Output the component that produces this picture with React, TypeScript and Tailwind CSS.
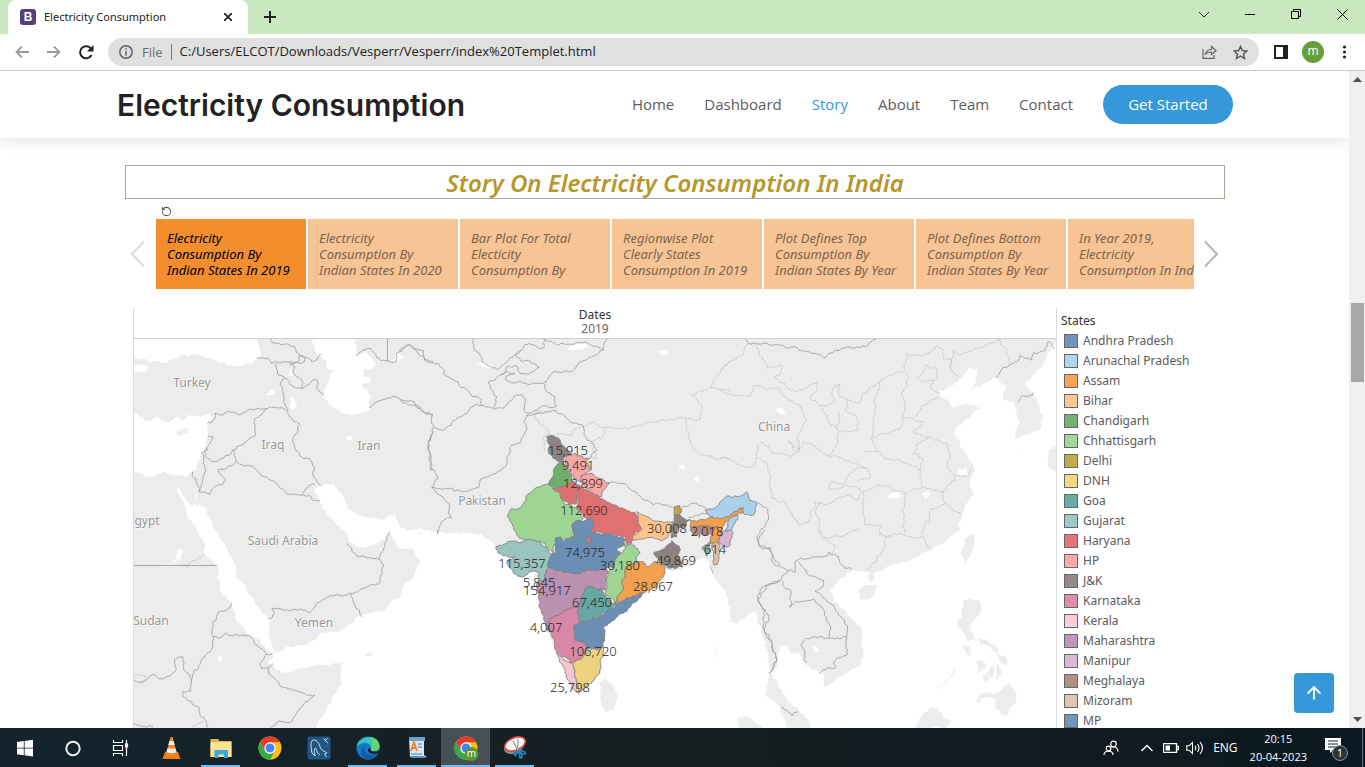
import React from "react";
import { ArrowUp, RotateCcw } from "lucide-react";

type Point = [number, number];

/* Map geometry is digitised in tiles at three units per map pixel. */
const parse = (ox: number, oy: number, text: string): Point[] =>
  text
    .trim()
    .split(/\s+/)
    .map((pair) => {
      const [x, y] = pair.split(",").map(Number);
      return [ox + x / 3, oy + y / 3] as Point;
    });

const noise = (x: number, y: number) => {
  const v = Math.sin(Math.round(x * 8) * 12.9898 + Math.round(y * 8) * 78.233) * 43758.5453;
  return v - Math.floor(v) - 0.5;
};

const split = (a: Point, b: Point, out: Point[]) => {
  const len = Math.hypot(a[0] - b[0], a[1] - b[1]);
  if (len > 2.4 && len < 70) {
    const mx = (a[0] + b[0]) / 2;
    const my = (a[1] + b[1]) / 2;
    const k = Math.min(len, 7) * 0.42;
    const mid: Point = [mx + noise(mx, my) * k, my + noise(my, mx) * k];
    split(a, mid, out);
    split(mid, b, out);
  } else {
    out.push(b);
  }
};

const rough = (points: Point[], closed: boolean) => {
  const out: Point[] = [points[0]];
  for (let i = 1; i < points.length; i++) split(points[i - 1], points[i], out);
  if (closed) split(points[points.length - 1], points[0], out);
  return out.map((p) => p[0].toFixed(1) + "," + p[1].toFixed(1)).join(" ");
};

const west = (t: string) => parse(133, 335, t);
const southWest = (t: string) => parse(133, 530, t);
const india = (t: string) => parse(480, 420, t);
const north = (t: string) => parse(400, 335, t);
const east = (t: string) => parse(720, 335, t);
const southEast = (t: string) => parse(700, 530, t);

const ocean = rough(
  [
    ...southWest("545,595 575,550 600,500 625,455 630,395 580,405 520,415 455,430 425,415 405,395 420,375 380,330 335,300 310,270 298,220 262,185 256,110 215,70 215,40 190,0"),
    ...west("160,530 132,455 160,497 180,515 195,470 188,510 210,512 240,570 255,590"),
    ...southWest("280,60 310,110 310,135 345,190 380,240 410,265 412,330 425,370 470,350 530,335 580,310 630,295 665,265 710,250 745,245 770,220 800,200 815,160 835,150 865,95 845,65 790,45 768,5 750,28 715,47 665,48 645,35 640,5 628,0"),
    ...west("605,560 580,530 560,495 545,470 558,450 600,445 635,490 640,515 680,545 740,555 770,540 790,545 800,580 900,598"),
    ...north("0,595 60,580 110,590 240,598 250,610"),
    ...india("0,340 40,370 48,385 60,405 105,410 80,425 100,462 125,472 150,455 165,455 172,520 190,600 225,690 265,780 295,822 335,790 360,762 362,710 370,680 375,620 430,580 490,520 545,490 555,450 610,445 650,420 675,410 690,440 700,465"),
    ...southEast("60,165 75,180 90,240 90,275 110,282 150,250 165,245 185,300 205,370 210,430 195,490 240,530 260,595 330,597 325,570 295,540 260,510 235,470 215,430 235,390 240,345 265,345 270,370 295,365 310,400 330,415 370,430 370,478 420,440 480,405 490,380 485,300 440,250 400,210 390,180 420,145 460,120 510,125 505,150 520,155 520,130 560,112 620,95 695,60 740,30 780,0"),
    ...east("715,570 730,530 765,480 750,440 765,410 740,360 700,295 735,255 785,220 740,205 700,220 655,170 700,150 730,120 750,95 775,105 755,160 800,140 830,130 860,150 850,195 885,200 895,255 885,310 925,298 960,285 968,240 940,180 915,150 960,100 980,60 1005,25 1020,10 1030,600"),
    [1062, 735] as Point,
  ],
  false,
);

const lakes = [
  west("-5,8 375,8 385,60 350,85 310,92 260,85 200,62 150,60 100,85 45,80 10,70 -5,60"),
  west("-5,240 15,235 40,260 70,245 90,260 120,255 135,245 150,255 165,240 200,245 230,235 235,250 225,260 225,300 215,350 180,410 160,425 100,412 50,425 -5,415"),
  west("-5,90 20,88 48,97 40,110 -5,110"),
  west("530,8 670,8 672,60 700,50 730,85 720,100 695,100 690,125 715,128 705,145 685,150 710,180 710,225 655,240 600,215 570,180 590,120 610,110 585,105 570,70 545,45"),
  west("400,175 415,160 425,170 420,180 405,182"),
  west("470,185 485,190 492,215 480,225 472,205"),
  west("640,308 652,300 658,312 650,318"),
  west("780,75 795,50 812,60 800,75"),
  west("465,105 478,100 482,120 470,122"),
  north("500,38 530,28 562,30 545,45 515,48"),
  north("225,86 255,84 280,98 250,97"),
  north("775,50 803,48 800,60 785,62"),
  north("835,395 850,388 855,402 842,402"),
  north("880,432 898,423 895,438 885,438"),
  east("168,225 182,218 200,238 185,240"),
  east("605,475 625,468 628,485 615,495"),
  east("498,482 540,468 545,485 510,490"),
  east("715,405 735,400 740,420 720,422"),
  southWest("97,115 130,85 138,55 150,60 145,85 125,95"),
  southWest("252,385 262,376 270,385 262,398"),
  southEast("338,350 350,352 362,372 345,365"),
].map((p) => rough(p, true));

const islands = [
  west("130,290 150,282 170,280 165,292 145,302 132,300"),
  southWest("693,372 715,369 717,374 698,376"),
  india("372,775 385,785 405,810 412,840 395,870 375,875 360,835 362,800"),
  india("710,675 708,700 703,728 706,700"),
  southEast("475,185 500,165 533,165 525,190 500,210 480,208"),
  southEast("825,12 820,50 797,103 780,70 795,30 812,15"),
  southEast("788,212 810,205 837,210 842,245 820,275 810,300 830,335 800,330 775,290 775,265 788,268 785,235"),
  southEast("787,348 810,350 817,372 805,378"),
  southEast("832,325 858,328 888,350 893,370 865,348 840,345"),
  southEast("890,372 918,380 920,405 900,395"),
  southEast("830,392 855,398 858,412 835,430"),
  southEast("848,440 860,425 868,440 858,462"),
  southEast("870,412 883,405 878,445 868,440"),
  southEast("895,402 905,420 895,440 885,448 890,420"),
  southEast("830,520 838,495 870,485 880,495 905,480 915,465 930,455 945,480 950,520 930,530 925,555 905,555 885,530 885,505 865,500 845,505"),
  southEast("705,480 740,450 765,415 766,428 735,458"),
  southEast("640,595 660,565 690,530 710,535 730,565 755,572 740,595"),
  southEast("113,562 130,560 160,572 180,585 190,598 118,598"),
  east("985,350 1015,330 1015,415 990,400"),
  east("885,345 898,343 895,348"),
].map((p) => rough(p, true));

const borders = [
  west("412,12 425,25 445,30 460,25 485,35 490,50 515,65 535,80 550,75 565,58"),
  west("372,70 405,68 415,85 450,80 480,82 500,75 500,60 510,62 515,80 500,85 470,85 485,100 480,115 492,125 500,130 508,150 508,160 490,160 470,148 455,130 435,120 430,85"),
  west("508,160 525,150 540,135 555,140 550,160 572,180"),
  west("455,130 442,148 450,170 452,200 460,215 470,245 500,268 495,290 480,310 485,335 500,355 535,378 545,400 540,420 562,453"),
  west("223,265 240,255 245,235 270,240 290,230 315,238 360,225 390,222 410,215 440,218 460,225"),
  west("400,220 385,240 370,248 368,300 340,320 300,345 250,380 235,378 218,365 215,350 232,325 240,305 225,303"),
  west("300,345 308,380 345,390 370,405 400,425 460,475 508,480 535,485 540,497 560,497"),
  west("508,480 518,460 530,450 545,448"),
  west("178,410 198,470 210,430 213,360 205,355 225,340"),
  west("308,383 255,405 278,435 265,450 245,455 230,478 198,470"),
  west("708,217 730,200 765,188 790,185 820,205 850,210 880,238 900,240"),
  west("668,62 690,45 712,40 745,78 790,80 790,60 805,40 830,30 870,45 875,75 900,80"),
  west("900,290 888,315 885,340 893,370 893,405 900,405"),
  southWest("643,40 672,78 740,88 770,5"),
  southWest("740,88 752,105 736,163 655,191 580,203 553,218 530,248 515,240 430,235 418,235 418,262 405,265"),
  southWest("655,191 685,260"),
  southWest("297,220 285,235 255,247 250,260 238,300 240,322 232,365 210,385 197,415 185,420 175,450 175,482 150,485 150,498 195,530 205,560 218,570 225,593"),
  southWest("240,322 265,322 278,308 300,318 340,318 360,330 400,373 418,368"),
  southWest("400,373 382,400 385,415 405,413 420,400"),
  southWest("405,413 408,432 440,467 520,495 545,495 468,578 430,578 412,593"),
  southWest("0,450 15,458 40,450 65,433 90,447 110,440 130,415 125,388 150,380 152,410 170,440 175,455"),
  southWest("0,583 20,588 60,590"),
  north("220,12 230,50 245,80 275,95 295,103 325,75 365,45 375,28 430,38 435,12"),
  north("620,12 610,45 575,65 540,80 510,110 455,115 430,145 370,145 320,138 318,125 345,115 325,110 305,120"),
  north("365,45 345,60 370,80 385,75 418,97 400,110 360,115 345,90 320,95 318,110 300,120 265,145 290,185 280,220 245,212 225,210 190,240 155,270 130,285 100,278 98,240 70,232 45,205 0,195"),
  north("430,12 500,28 560,22 610,45"),
  north("0,50 25,28 45,40 70,65 85,80 115,85 135,122 180,155 245,195 245,212"),
  north("280,225 310,220 340,190 365,178 378,200 378,235 400,230 425,215 470,213 465,185 440,170 430,145"),
  north("380,240 440,230 465,225 490,240 510,260 550,275"),
  north("380,240 372,262 380,285 360,325 335,330 320,370 315,395 265,425 240,435 235,458 180,468 95,458 115,430 90,400 85,320 100,278"),
  north("95,458 120,480 145,505 145,535 155,548 125,560 112,598"),
  north("550,275 560,310 590,345 570,370 555,380 570,400"),
  india("385,190 400,185 440,195 480,228 520,255 580,262"),
  india("605,275 610,258 635,250 675,262 680,280 650,285 625,290"),
  india("830,245 860,265 865,300 835,345 840,380 870,382 880,410 900,435"),
  india("690,440 698,460"),
  india("900,480 860,495 835,535 855,570 850,625 875,670 890,720 868,760"),
  southEast("195,0 178,20 178,48 210,55 215,85 225,105 265,122 245,140 240,152 190,170 180,185 173,208 205,255 208,270 192,300 215,335 230,390 208,430"),
  southEast("265,122 285,128 285,95 330,85 370,80 385,68 415,80 425,105 455,118"),
  southEast("295,95 320,130 345,140 370,150 368,170 345,183 390,220 435,270 443,300 440,320 385,325 340,320 318,325 303,345 312,375 320,398"),
  southEast("245,152 255,175 272,180 270,232 300,215 345,210 368,235 388,285 388,322"),
  southEast("440,320 443,372 400,398 405,415 378,418 358,430"),
  southEast("243,530 265,545 275,557 295,545"),
  east("75,12 85,25 160,30 225,35 260,50 315,68 375,38 440,35 468,12"),
  east("830,128 840,112 890,80 900,62 935,75 940,55 975,45 985,20 1003,42"),
  east("895,200 905,183 938,180 940,172"),
].map((p) => rough(p, false));

const provinces = [
  east("0,103 25,85 70,60 80,28 105,28 120,65 140,100 185,92 180,120 165,125 230,170 290,145 288,170 270,190 300,212 340,205 335,165 360,148 358,185 415,205 430,175 480,142 515,120 555,105 560,55 610,60 650,32 670,45 670,70 695,75 690,95 712,125"),
  east("0,163 35,178 90,185 105,152 140,165 165,160 195,185 240,210 258,255 235,300 240,345 205,318 225,350 250,320 300,345 325,362 350,330 355,290 415,285 410,245 375,225 380,195"),
  east("300,212 320,240 325,262 355,285 355,225"),
  east("480,142 462,200 462,250 455,305 475,350 495,372 540,375 600,405 610,455 670,470 705,420 740,425 755,400"),
  east("455,305 500,295 545,275 548,245 555,205 545,180 560,150 560,110"),
  east("548,248 585,255 610,260 580,290 625,305 680,325 690,370 680,395 705,420"),
  east("590,245 605,215 655,187"),
  east("595,130 620,90 650,105 645,135 600,138"),
  east("640,135 632,160 660,172"),
  east("690,95 700,45 720,62 760,45 840,12 870,85"),
  east("600,405 605,370 580,355 590,330 625,305"),
  east("435,350 475,352"),
  east("0,372 40,375 80,400 105,385 112,330 130,322 155,355 215,365 240,345"),
  east("112,370 140,385 150,420 155,490 190,500 235,570 265,560 285,500 330,505 380,480 415,495 425,470 400,455 325,460 335,440 375,445 410,395 445,405 450,425 410,435"),
  east("325,362 365,368 410,385 440,400"),
  east("430,470 480,450 530,468 555,475 610,455"),
  east("430,470 430,530 435,570 485,570 480,598"),
  east("555,475 548,530 555,598"),
  east("670,470 675,505 635,520 625,560 605,598"),
  east("675,505 725,535"),
  east("300,500 285,535 300,565 300,598"),
  southEast("360,0 370,25 405,45 400,65 385,68"),
  southEast("370,25 420,20 475,0"),
  southEast("500,118 530,95 545,65 560,20 600,10 640,25 670,20 697,60"),
  southEast("560,20 535,12"),
  north("405,250 405,235 440,230"),
  north("405,250 420,270 445,285 445,300 430,305 435,350"),
  north("470,300 515,300 530,280 550,275 585,262 612,280 605,310 575,318 580,350 590,370 560,372"),
  north("612,280 690,280 780,255 860,250 900,255 905,210 875,180 935,158 940,140 990,75"),
  north("935,158 990,165"),
  north("860,250 865,310 890,350 940,370 990,372"),
  southWest("150,105 165,112 190,90 215,72"),
  southWest("5,437 38,437 38,455 8,455"),
  southWest("178,590 210,575"),
].map((p) => rough(p, false));

const states: { name: string; fill: string; shape: string }[] = [
  { name: "Jammu and Kashmir", fill: "#8b8482", shape: "200,50 215,45 240,60 260,85 275,105 255,110 250,125 230,122 205,100 210,80" },
  { name: "Punjab", fill: "#71ad6c", shape: "232,132 248,125 260,150 275,165 280,185 250,200 220,203 203,193 220,165 222,145" },
  { name: "Haryana", fill: "#e07173", shape: "218,205 250,200 275,185 300,195 290,215 290,250 270,255 245,240 240,222" },
  { name: "Rajasthan", fill: "#9fd592", shape: "190,195 215,200 240,225 247,245 270,256 290,265 310,295 275,320 285,345 250,360 230,355 222,400 205,385 180,365 120,355 95,310 82,290 95,265 120,265 150,220" },
  { name: "Gujarat", fill: "#99c4bf", shape: "48,380 90,365 120,368 150,358 180,365 205,390 212,410 200,450 198,480 183,488 170,455 150,455 125,472 105,462 80,425 105,410 70,408 55,400" },
  { name: "Madhya Pradesh", fill: "#6b8eb5", shape: "275,320 300,302 325,295 340,305 335,340 380,342 400,348 435,358 435,378 410,390 425,400 410,415 400,445 370,448 330,450 290,460 250,458 205,440 215,400 228,395 225,355 240,350 250,365 285,345" },
  { name: "Uttar Pradesh", fill: "#e07173", shape: "290,195 320,210 360,235 400,255 440,272 465,278 475,300 485,325 460,345 455,370 440,375 438,350 400,345 370,340 335,340 340,300 320,295 290,265" },
  { name: "Lalitpur", fill: "#e07173", shape: "320,348 328,350 333,368 322,365" },
  { name: "Himachal Pradesh", fill: "#faa5a6", shape: "258,108 285,100 310,115 325,115 332,150 318,160 305,165 300,185 280,175 265,150 255,125" },
  { name: "Uttarakhand", fill: "#faa5a6", shape: "303,168 330,160 355,175 388,188 375,205 365,230 345,225 320,205 305,190" },
  { name: "Bihar", fill: "#fdc48b", shape: "470,275 510,295 545,305 580,305 575,330 550,360 510,352 460,362 458,345 485,325 475,300" },
  { name: "West Bengal", fill: "#8b8482", shape: "582,285 600,285 628,300 620,315 595,320 590,350 575,355 570,325 582,308" },
  { name: "South Bengal", fill: "#8b8482", shape: "575,362 598,380 600,420 608,440 570,445 545,430 520,400 555,385" },
  { name: "Sikkim", fill: "#bda548", shape: "582,262 600,257 602,280 582,283" },
  { name: "Meghalaya", fill: "#ab8c7c", shape: "630,330 660,318 715,322 700,345 640,345" },
  { name: "Assam", fill: "#f29e4c", shape: "628,297 700,292 740,290 775,268 790,262 788,278 760,290 735,305 725,335 715,370 695,372 695,345 715,322 660,318 632,325" },
  { name: "Arunachal Pradesh", fill: "#abd0e9", shape: "678,270 710,260 740,228 775,230 800,215 808,240 830,255 820,285 790,280 790,262 775,268 740,290 690,290" },
  { name: "Nagaland", fill: "#abd0e9", shape: "735,330 745,300 775,285 765,310 755,330" },
  { name: "Manipur", fill: "#dab3d1", shape: "720,350 733,333 758,335 755,355 745,380 718,370" },
  { name: "Mizoram", fill: "#dabdae", shape: "695,375 700,368 718,372 718,400 710,435 702,435" },
  { name: "Tripura", fill: "#7db4ae", shape: "665,385 690,365 690,395 678,408" },
  { name: "Maharashtra", fill: "#ba91b1", shape: "205,440 250,458 290,460 330,450 380,448 380,510 350,510 340,502 320,500 305,535 295,560 245,580 212,595 210,615 192,600 175,530 170,490 198,480 200,450" },
  { name: "Goa", fill: "#4d9a94", shape: "195,612 210,618 208,635 201,630" },
  { name: "Karnataka", fill: "#d987a6", shape: "212,595 245,580 295,560 300,605 283,620 285,665 320,670 318,690 300,718 270,725 230,695 215,640 208,620" },
  { name: "Telangana", fill: "#67a7a3", shape: "320,500 340,502 350,510 365,505 375,530 405,550 400,568 360,585 300,608 295,560 305,530" },
  { name: "Odisha", fill: "#f0a04f", shape: "480,425 490,425 500,440 525,423 535,432 555,440 550,470 520,505 490,518 445,540 405,550 430,505 425,480 440,440 465,430" },
  { name: "Chhattisgarh", fill: "#9fd592", shape: "438,378 462,375 480,400 470,425 440,440 425,480 430,505 405,550 390,535 375,525 380,480 385,455 400,445 410,415 425,400" },
  { name: "Andhra Pradesh", fill: "#6b8eb5", shape: "490,520 470,545 430,580 385,610 370,620 370,685 320,690 318,670 300,665 283,655 283,615 300,608 360,588 405,562 405,550 450,535" },
  { name: "Tamil Nadu", fill: "#efd280", shape: "270,728 300,718 330,690 370,680 360,720 360,760 335,790 295,822 290,790" },
  { name: "Kerala", fill: "#f7c4d4", shape: "230,697 270,728 290,790 292,818 275,805 255,760" },
];

const values: [number, number, string][] = [
  [568, 455, "15,915"], [578, 470, "9,491"], [583, 488, "12,899"], [584, 515, "112,690"],
  [667, 533, "30,008"], [707, 536, "2,018"], [585, 557, "74,975"], [715, 554, "614"],
  [522, 568, "115,357"], [620, 570, "30,180"], [676, 565, "49,869"], [539, 587, "5,845"],
  [547, 595, "154,917"], [653, 591, "28,967"], [592, 607, "67,450"], [546, 632, "4,007"],
  [593, 656, "106,720"], [570, 692, "25,798"],
];

const countries: [number, number, string][] = [
  [192, 387, "Turkey"], [273, 449, "Iraq"], [369, 450, "Iran"], [147, 525, "gypt"],
  [283, 545, "Saudi Arabia"], [151, 625, "Sudan"], [314, 627, "Yemen"], [482, 505, "Pakistan"], [774, 431, "China"],
];

function StateMap() {
  return (
    <svg viewBox="134 339 922 389" preserveAspectRatio="xMinYMin slice" className="block h-full w-full" role="img" aria-label="Electricity consumption by state">
      <rect x="134" y="339" width="922" height="389" fill="#ececec" />
      <polygon points={ocean} fill="#fff" />
      {lakes.map((p, i) => <polygon key={i} points={p} fill="#fff" />)}
      {islands.map((p, i) => <polygon key={i} points={p} fill="#ececec" />)}
      <g fill="none" stroke="#b5b5b5" strokeWidth="0.7" strokeDasharray="2 0.8">
        {provinces.map((p, i) => <polyline key={i} points={p} />)}
      </g>
      <g fill="none" stroke="#a0a0a0" strokeWidth="0.9">
        {borders.map((p, i) => <polyline key={i} points={p} />)}
        <path d="M134 565.5H217M387.500 339V361M437.500 530V534" />
      </g>
      <g stroke="#7d7b78" strokeWidth="0.8" strokeLinejoin="round">
        {states.map((s) => <polygon key={s.name} points={rough(india(s.shape), true)} fill={s.fill} />)}
        <circle cx="575.700" cy="500" r="1.800" fill="#bda548" />
      </g>
      <g fontFamily="'Noto Sans', sans-serif" fontSize="12" fill="#989898" textAnchor="middle" stroke="#f4f4f4" strokeWidth="2" paintOrder="stroke">
        {countries.map(([x, y, t]) => <text key={t} x={x} y={y}>{t}</text>)}
      </g>
      <g fontFamily="'Noto Sans', sans-serif" fontSize="13" fontWeight="300" fill="#222" textAnchor="middle">
        {values.map(([x, y, t]) => <text key={t} x={x} y={y}>{t}</text>)}
      </g>
    </svg>
  );
}

const legend: [string, string][] = [
  ["Andhra Pradesh", "bg-[#7295bd]"], ["Arunachal Pradesh", "bg-[#b1d5ed]"], ["Assam", "bg-[#f7a456]"], ["Bihar", "bg-[#fdc794]"],
  ["Chandigarh", "bg-[#74b370]"], ["Chhattisgarh", "bg-[#a2d995]"], ["Delhi", "bg-[#c4ab4f]"], ["DNH", "bg-[#f2d683]"],
  ["Goa", "bg-[#6aaca7]"], ["Gujarat", "bg-[#9dcac4]"], ["Haryana", "bg-[#e57577]"], ["HP", "bg-[#fea9a9]"],
  ["J&K", "bg-[#938b88]"], ["Karnataka", "bg-[#de8dac]"], ["Kerala", "bg-[#fbcbdb]"], ["Maharashtra", "bg-[#c097b7]"],
  ["Manipur", "bg-[#ddb8d6]"], ["Meghalaya", "bg-[#b09181]"], ["Mizoram", "bg-[#dec4b7]"], ["MP", "bg-[#7295bd]"],
];

const stories = [
  ["Electricity", "Consumption By", "Indian States In 2019"],
  ["Electricity", "Consumption By", "Indian States In 2020"],
  ["Bar Plot For Total", "Electicity", "Consumption By"],
  ["Regionwise Plot", "Clearly States", "Consumption In 2019"],
  ["Plot Defines Top", "Consumption By", "Indian States By Year"],
  ["Plot Defines Bottom", "Consumption By", "Indian States By Year"],
  ["In Year 2019,", "Electricity", "Consumption In India"],
];

function BrowserBar() {
  return (
    <header className="shrink-0 font-['Open_Sans',sans-serif]">
      <div className="flex h-[34px] bg-[#cbe9c0] pl-2">
        <div className="flex w-60 items-center rounded-t-lg bg-white px-3">
          <span className="grid size-4 place-items-center rounded-[3px] bg-[#563d7c] font-['Liberation_Sans',sans-serif] text-xs font-bold text-white">B</span>
          <span className="ml-2 grow whitespace-nowrap font-['Noto_Sans',sans-serif] text-[11px] text-[#222]">Electricity Consumption</span>
          <button aria-label="Close tab" className="grid size-4 place-items-center">
            <svg width="8" height="8" stroke="#222" strokeWidth="1.700"><path d="M0 0L8 8M8 0L0 8" /></svg>
          </button>
        </div>
        <button aria-label="New tab" className="grid w-11 place-items-center">
          <svg width="12" height="12" stroke="#222" strokeWidth="2"><path d="M6 0V12M0 6H12" /></svg>
        </button>
        <div className="ml-auto flex h-7 items-center">
          <button aria-label="Search tabs" className="grid w-[46px] place-items-center"><svg width="12" height="7" fill="none" stroke="#222"><path d="M1 1L6 6L11 1" /></svg></button>
          <button aria-label="Minimize" className="grid w-[46px] place-items-center"><svg width="10" height="10"><path d="M0 5.500H10" stroke="#000" /></svg></button>
          <button aria-label="Restore" className="grid w-[46px] place-items-center"><svg width="10" height="10" fill="none" stroke="#000"><path d="M.5 2.500H7.500V9.500H.5ZM2.500 2.500V.5H9.500V7.500H7.500" /></svg></button>
          <button aria-label="Close" className="grid w-[46px] place-items-center"><svg width="11" height="11" stroke="#000"><path d="M.5.5L10.500 10.500M10.500.5L.5 10.500" /></svg></button>
        </div>
      </div>
      <div className="flex h-[37px] items-center border-b border-[#c9c9c9] bg-white">
        <button aria-label="Back" className="ml-[14px] grid size-4 place-items-center"><svg width="14" height="12" fill="none" stroke="#9a9a9a" strokeWidth="1.800"><path d="M14 6H1.500M7 .5L1.500 6L7 11.500" /></svg></button>
        <button aria-label="Forward" className="ml-4 grid size-4 place-items-center"><svg width="14" height="12" fill="none" stroke="#9a9a9a" strokeWidth="1.800"><path d="M0 6H12.500M7 .5L12.500 6L7 11.500" /></svg></button>
        <button aria-label="Reload" className="ml-4 grid size-4 place-items-center"><svg width="15" height="15" viewBox="0 0 15 15" fill="none" stroke="#222" strokeWidth="2"><path d="M12.500 10A6 6 0 1 1 12 3.800" /><path d="M14.500 0V6.500H8Z" fill="#222" stroke="none" /></svg></button>
        <div className="ml-[14px] flex h-7 min-w-0 grow items-center rounded-full bg-[#e0e0e0] px-[11px]">
          <svg width="14" height="14" fill="none" stroke="#5f6368" strokeWidth="1.500"><circle cx="7" cy="7" r="6.200" /><path d="M7 6V10.500M7 3.200V4.800" /></svg>
          <span className="ml-[9px] border-r border-[#777] pr-2 text-[13px] leading-4 text-[#6a6d70]">File</span>
          <input aria-label="Address" readOnly value="C:/Users/ELCOT/Downloads/Vesperr/Vesperr/index%20Templet.html" className="ml-2 min-w-0 grow bg-transparent text-[13px] text-[#222] outline-none" />
          <button aria-label="Share"><svg width="15" height="14" fill="none" stroke="#666" strokeWidth="1.200"><path d="M1 4V13.300H12V10M3 10C4 6 6 4.500 9.500 4.500V1.500L14 5.800L9.500 9.500V7C7 7 4.500 7.500 3 10Z" /></svg></button>
          <button aria-label="Bookmark" className="ml-4"><svg width="15" height="15" fill="none" stroke="#555" strokeWidth="1.400"><path d="M7.500 1.300L9.300 5.500L14 6L10.500 9L11.500 13.500L7.500 11L3.500 13.500L4.500 9L1 6L5.700 5.500Z" /></svg></button>
        </div>
        <button aria-label="Side panel" className="ml-[15px]"><svg width="14" height="14"><path d="M1 1H13V13H1Z" fill="#fff" stroke="#202124" strokeWidth="2" /><path d="M9 0H14V14H9Z" fill="#202124" /></svg></button>
        <button aria-label="Profile" className="ml-[14px] grid size-[22px] place-items-center rounded-full bg-[#689f38] pb-0.5 text-xs leading-4 text-white">m</button>
        <button aria-label="Menu" className="ml-[18px] mr-[18px]"><svg width="5" height="14" fill="#222"><circle cx="2.500" cy="2" r="1.600" /><circle cx="2.500" cy="7" r="1.600" /><circle cx="2.500" cy="12" r="1.600" /></svg></button>
      </div>
    </header>
  );
}

function SiteHeader() {
  return (
    <div className="relative z-10 flex h-[67px] shrink-0 items-center bg-white pl-px shadow-[0_2px_15px_rgba(0,0,0,0.12)]">
      <div className="mx-auto flex w-full max-w-[1116px] items-center">
        <h1 className="grow whitespace-nowrap font-['Inter',sans-serif] text-[30px] font-semibold leading-9 text-[#222]">Electricity Consumption</h1>
        <nav className="flex items-center gap-[30px] whitespace-nowrap font-['Open_Sans',sans-serif] text-[15px] text-[#5c5c5c]">
          <a href="#home">Home</a>
          <a href="#dashboard">Dashboard</a>
          <a href="#story" className="text-[#3498db]">Story</a>
          <a href="#about">About</a>
          <a href="#team">Team</a>
          <a href="#contact">Contact</a>
          <a href="#start" className="grid h-[39px] w-[130px] place-items-center rounded-full bg-[#3498db] text-white">Get Started</a>
        </nav>
      </div>
    </div>
  );
}

function Story() {
  return (
    <div className="flex min-h-0 grow pl-px">
      <section className="mx-auto mt-[27px] flex min-h-0 w-full max-w-[1100px] flex-col font-['Noto_Sans',sans-serif]">
        <h2 className="h-[34px] shrink-0 border border-[#a8a898] text-center text-2xl/[34px] font-semibold italic text-[#b5972b]">Story On Electricity Consumption In India</h2>
        <div className="flex h-5 shrink-0 items-center pl-9 pt-1">
          <button aria-label="Revert"><RotateCcw size={11} strokeWidth={2.200} color="#555" /></button>
        </div>
        <div className="flex h-[70px] shrink-0 items-center">
          <button aria-label="Previous story" className="w-[31px] shrink-0 pl-[5px]"><svg width="16" height="28" fill="none" stroke="#ddd" strokeWidth="2.200"><path d="M14 1.500L2 14L14 26.500" /></svg></button>
          <div className="flex min-w-0 grow gap-0.5 overflow-hidden">
            {stories.map((lines, i) => (
              <button key={i} className={i === 0
                ? "h-[70px] w-[150px] shrink-0 whitespace-nowrap bg-[#f28e2b] pl-[11px] text-left text-[13px] italic leading-4 text-black"
                : "h-[70px] w-[150px] shrink-0 whitespace-nowrap bg-[#f7c595] pl-[11px] text-left text-[13px] italic leading-4 text-[#7d634b]"}>
                {lines.map((l) => <span key={l} className="block">{l}</span>)}
              </button>
            ))}
          </div>
          <button aria-label="Next story" className="w-[31px] shrink-0 pl-[9px]"><svg width="16" height="28" fill="none" stroke="#b9b9b9" strokeWidth="2.200"><path d="M2 1.500L14 14L2 26.500" /></svg></button>
        </div>
        <div className="mt-[19px] flex min-h-0 grow pl-2">
          <div className="flex min-w-0 grow flex-col border-x border-[#d9d9d9]">
            <div className="h-[31px] shrink-0 border-b border-[#cfcfcf] text-center text-xs leading-[14px] text-[#333]">
              <div>Dates</div>
              <div className="text-[#666]">2019</div>
            </div>
            <div className="min-h-0 grow"><StateMap /></div>
          </div>
          <div className="w-[168px] shrink-0 overflow-hidden pl-1 pt-[3px] text-xs text-[#5c5c5c]">
            <div className="leading-5 text-[#333]">States</div>
            <ul className="pl-[3px]">
              {legend.map(([name, color]) => (
                <li key={name} className="flex h-5 items-center gap-[5px]">
                  <span className={"size-[14px] border border-[#666] " + color} />
                  {name}
                </li>
              ))}
            </ul>
          </div>
        </div>
      </section>
    </div>
  );
}

function ChromeLogo() {
  return (
    <g>
      <circle cx="12" cy="12" r="11.500" fill="#fbc116" />
      <path d="M12 6.200H22A11.500 11.500 0 0 0 2.040 6.250L7 15Z" fill="#e33b2e" />
      <path d="M2.040 6.250A11.500 11.500 0 0 0 12 23.500L17 14.900A5.750 5.750 0 0 1 7 14.900Z" fill="#2da94f" />
      <circle cx="12" cy="12" r="5.700" fill="#fff" />
      <circle cx="12" cy="12" r="4.500" fill="#4285f4" />
    </g>
  );
}

const idle = "w-full";
const open = "mx-[5px] grow border-b-2 border-[#76b9ed]";
const active = "w-full border-b-2 border-[#76b9ed] bg-[#455156]";

const apps: { name: string; state: string; icon: React.ReactNode }[] = [
  { name: "Start", state: idle, icon: <path d="M4 6L10.800 5V11.700H4ZM11.600 4.900L20 3.700V11.700H11.600ZM4 12.500H10.800V19.200L4 18.200ZM11.600 12.500H20V20.500L11.600 19.300Z" fill="#fff" /> },
  { name: "Cortana", state: idle, icon: <circle cx="11" cy="12.500" r="6.700" fill="none" stroke="#eee" strokeWidth="2" /> },
  { name: "Task view", state: idle, icon: <path d="M2.500 4V6.500H11.500V4M2.500 20V17.500H11.500V20M2.500 9.500H11.500V14.500H2.500ZM15.500 4V20M14.500 8H16.500V11H14.500Z" fill="none" stroke="#fff" strokeWidth="1.200" /> },
  { name: "VLC", state: idle, icon: <g><path d="M5 16H18L20.500 23H2.500Z" fill="#f07d13" /><path d="M10.500 1H12.500L17 18C15 20.500 8 20.500 6 18Z" fill="#f5862a" /><path d="M9.400 5H13.600L14.700 9H8.300ZM7.400 12.500H15.600L16.500 16C14.500 17.500 8.500 17.500 6.500 16Z" fill="#eee" /></g> },
  { name: "File Explorer", state: open, icon: <g><path d="M1.500 3H9L10.500 5H22.500V21H1.500Z" fill="#e8b33e" /><path d="M1.500 6H22.500V21H1.500Z" fill="#fde294" /><path d="M5.500 22V14H19V22H15V18.500H9.500V22Z" fill="#36a9e0" /></g> },
  { name: "Chrome", state: idle, icon: <ChromeLogo /> },
  { name: "MySQL Workbench", state: idle, icon: <g><rect x="0.500" y="0.500" width="23" height="23" rx="2" fill="#225583" /><path d="M5 17C4 12 3 5 6 4C11 4 12 8 13.500 12C15 15 18 15 20 17L17.500 18L19.500 21M5 17L8 20C7 15 7 12 8.500 12C10 14 10 18 13 19M16.500 2.500L21 7M17.500 5L20.500 2.500" fill="none" stroke="#cfe0ec" strokeWidth="1" /></g> },
  { name: "Edge", state: open, icon: <g><circle cx="12" cy="12" r="11.500" fill="#1479c9" /><path d="M.8 11C2 -1 23 -3.500 23.500 10.500C23.500 16 16 16 14.500 14C17 10 12 5.500 7 7C3 8 1 10 .8 11Z" fill="#39c2c0" /><path d="M14 1C21 2 24 7 23.500 11C23 15.500 17 16 14.500 14C17 10 17 5 14 1Z" fill="#62d66b" /><path d="M9 10C7 14 10 20 17 19C20 18.500 21.500 17 22 17.500C19 23 14 24 11 23.400C4 22 3 13 9 10Z" fill="#155ca8" /><path d="M14.600 12C10 12 11.500 18.500 18 18L23.500 16.800L23.500 14C19 16.500 15 15.500 14.500 14Z" fill="#14232d" /></g> },
  { name: "WordPad", state: open, icon: <g><path d="M4 2H19V19L22 21H5Z" fill="#d8e7f6" /><path d="M4 1H20V5H4Z" fill="#6aa5c5" /><path d="M6 15L9 6L12 15M7 12H11" stroke="#f28320" strokeWidth="1.800" fill="none" /><path d="M13 8H17M13 11H17M6 18H17" stroke="#4b7bb4" strokeWidth="1" /><path d="M5 20H20L21 22H6Z" fill="#4b91d1" /></g> },
  { name: "Chrome, profile m", state: active, icon: <g><ChromeLogo /><circle cx="17.500" cy="18" r="7" fill="#5a9632" /><text x="17.500" y="21" textAnchor="middle" fontSize="10" fill="#fff" fontFamily="Open Sans">m</text></g> },
  { name: "Snipping Tool", state: open, icon: <g><ellipse cx="11" cy="10.500" rx="10.500" ry="7" transform="rotate(-22 11 10.500)" fill="#8d8f92" /><ellipse cx="12" cy="8" rx="10.800" ry="6.300" transform="rotate(-22 12 8)" fill="#f4f4f4" stroke="#d94447" strokeWidth="1.600" /><path d="M10 5L16 17M15 3L14.500 17" stroke="#999" strokeWidth="1.200" /><path d="M15 15L12.500 19.500C10 18 11 15.500 15 15ZM16 15.500L17 22C20 22 20 18.500 16 15.500ZM16 15C18 14 22 15 22.500 17.500C20 19 18 17 16 15Z" fill="none" stroke="#2482c9" strokeWidth="1.600" /></g> },
];

function Taskbar() {
  return (
    <footer className="flex h-[39px] shrink-0 items-stretch bg-gradient-to-r from-[#13242e] via-[#171e21] to-[#0b1821] font-['Open_Sans',sans-serif] text-xs text-white">
      {apps.map((app) => (
        <button key={app.name} aria-label={app.name} className="flex w-[49px]">
          <span className={"flex h-full justify-center pt-2 " + app.state}>
            <svg width="24" height="24" viewBox="0 0 24 24" className="shrink-0 overflow-visible">{app.icon}</svg>
          </span>
        </button>
      ))}
      <div className="ml-auto flex items-center">
        <button aria-label="People" className="mr-[22px]"><svg width="16" height="16" fill="none" stroke="#fff" strokeWidth="1.200"><circle cx="10.500" cy="4" r="2.800" /><circle cx="5.500" cy="8.500" r="2.300" /><path d="M1 15C1 10 10 10 10 15M7.500 7C12 5.500 15 8 15 11.500" /></svg></button>
        <button aria-label="Hidden icons" className="mr-[10px]"><svg width="12" height="8" fill="none" stroke="#fff" strokeWidth="1.400"><path d="M.5 7L6 1.500L11.500 7" /></svg></button>
        <svg width="16" height="10" fill="none" stroke="#fff" className="mr-[7px]"><path d="M.5 .5H13.500V9.500H.5ZM14 3.500H15.500V6.500H14" strokeWidth="1.300" /><path d="M2.500 2.500H7V7.500H2.500Z" fill="#fff" stroke="none" /></svg>
        <svg width="18" height="14" fill="none" stroke="#fff" strokeWidth="1.100" className="mr-[9px]"><path d="M.8 4.800H3L6.500 1.500V12.500L3 9.200H.8ZM9 4.800Q10.500 7 9 9.200M11.500 3Q14.500 7 11.500 11M14 1.200Q19 7 14 12.800" /></svg>
        <span className="mr-3 text-xs">ENG</span>
        <div className="mr-[17px] text-center text-[11px] leading-[18px]"><div>20:15</div><div>20-04-2023</div></div>
        <button aria-label="Notifications" className="mr-3">
          <svg width="26" height="26" viewBox="0 0 26 26"><path d="M1 3H17V15H9L6 18V15H1Z" fill="#fff" /><path d="M4 6H14M4 9H14M4 12H14" stroke="#17242b" /><circle cx="16" cy="18" r="7.500" fill="#27353d" stroke="#87949a" /><text x="16" y="22" textAnchor="middle" fontSize="11" fill="#fff" fontFamily="Open Sans">1</text></svg>
        </button>
        <span className="h-full border-l border-[#67727a] pr-0.5" />
      </div>
    </footer>
  );
}

export default function App() {
  return (
    <div className="flex h-screen flex-col overflow-hidden bg-white">
      <BrowserBar />
      <div className="flex min-h-0 grow">
        <main className="relative flex min-w-0 grow flex-col overflow-hidden">
          <SiteHeader />
          <Story />
          <button aria-label="Back to top" className="absolute bottom-[15px] right-[15px] grid size-10 place-items-center rounded bg-[#3498db] text-white"><ArrowUp size={20} strokeWidth={2.200} /></button>
        </main>
        <div className="flex w-4 shrink-0 flex-col items-center bg-[#f0f0f0]">
          <svg width="9" height="17" fill="#505050"><path d="M0 11L4.500 6L9 11Z" /></svg>
          <div className="grow-[215]" />
          <div className="h-[79px] w-[13px] shrink-0 bg-[#a8a8a8]" />
          <div className="grow-[329]" />
          <svg width="9" height="17" fill="#505050"><path d="M0 6L4.500 11L9 6Z" /></svg>
        </div>
      </div>
      <Taskbar />
    </div>
  );
}
